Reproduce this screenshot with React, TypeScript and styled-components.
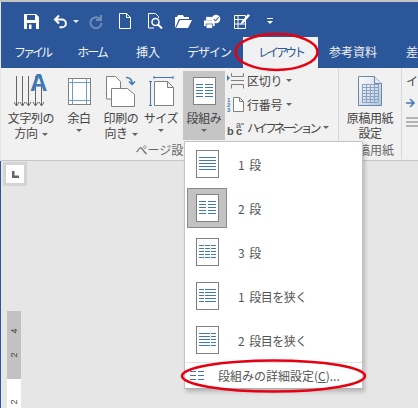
import React from 'react';
import styled, { createGlobalStyle } from 'styled-components';

const GlobalStyle = createGlobalStyle`
  html, body { margin: 0; padding: 0; background: #e6e6e6; }
  body { font-family: "Noto Sans CJK JP", "Noto Sans", sans-serif; }
`;

const Page = styled.div`
  position: relative;
  width: 418px;
  height: 408px;
  overflow: hidden;
  display: flex;
  flex-direction: column;
  border-top: 2px solid #c4c4c4;
  box-sizing: border-box;
`;

const Header = styled.div`
  background: #2b579a;
  height: 66px;
  margin-left: 1px;
  display: flex;
  flex-direction: column;
  flex: none;
`;

const Qat = styled.div`
  height: 35px;
  display: flex;
  align-items: center;
  padding-left: 23px;
  padding-top: 3px;
  box-sizing: border-box;
`;

const QatIcon = styled.svg<{ $gap: number }>`
  margin-right: ${p => p.$gap}px;
  flex: none;
`;

const Tabs = styled.div`
  flex: 1;
  display: flex;
  align-items: stretch;
`;

const Tab = styled.div<{ $w: number; $active?: boolean; $track?: number }>`
  width: ${p => p.$w}px;
  flex: none;
  display: flex;
  align-items: center;
  justify-content: center;
  font-size: 12px;
  letter-spacing: ${p => p.$track ?? 0}px;
  white-space: nowrap;
  color: ${p => (p.$active ? '#2b579a' : '#f2f2f2')};
  background: ${p => (p.$active ? '#f1f1f1' : 'transparent')};
  padding-bottom: 3px;
  box-sizing: border-box;
`;

const Ribbon = styled.div`
  height: 93px;
  flex: none;
  background: #f1f1f1;
  border-bottom: 1px solid #c6c6c6;
  margin-left: 1px;
  display: flex;
  box-sizing: border-box;
`;

const Group = styled.div<{ $w: number; $pad?: number; $last?: boolean }>`
  width: ${p => p.$w}px;
  flex: none;
  display: flex;
  flex-direction: column;
  padding-left: ${p => p.$pad ?? 0}px;
  box-sizing: border-box;
  border-right: ${p => (p.$last ? 'none' : '1px solid #d8d8d8')};
  margin-bottom: 1px;
`;

const GroupBody = styled.div`
  flex: 1;
  display: flex;
  padding-top: 3px;
`;

const GroupLabel = styled.div<{ $shift?: number }>`
  height: 17px;
  font-size: 12px;
  line-height: 15px;
  color: #666;
  text-align: center;
  white-space: nowrap;
  padding-right: ${p => p.$shift ?? 0}px;
`;

const LargeButton = styled.div<{ $w: number; $on?: boolean }>`
  width: ${p => p.$w}px;
  height: 69px;
  flex: none;
  display: flex;
  flex-direction: column;
  align-items: center;
  background: ${p => (p.$on ? '#c5c5c5' : 'transparent')};
  padding-top: 2px;
  box-sizing: border-box;
`;

const IconSlot = styled.div`
  height: 36px;
  flex: none;
  display: flex;
  align-items: center;
  justify-content: center;
`;

const LargeLabel = styled.div`
  font-size: 12px;
  line-height: 15px;
  color: #444;
  text-align: center;
  white-space: nowrap;
  letter-spacing: -0.4px;
  margin-top: 1px;
`;

const Caret = styled.span`
  display: inline-block;
  width: 0;
  height: 0;
  border-left: 3px solid transparent;
  border-right: 3px solid transparent;
  border-top: 3px solid #666;
  vertical-align: middle;
  margin-left: 4px;
`;

const BlockCaret = styled(Caret)`
  display: block;
  margin: 4px auto 0;
`;

const SmallColumn = styled.div`
  display: flex;
  flex-direction: column;
  margin-top: -2px;
  width: 110px;
  flex: none;
`;

const SmallRow = styled.div<{ $track?: number }>`
  height: 23.5px;
  display: flex;
  align-items: center;
  font-size: 12px;
  color: #444;
  white-space: nowrap;
  letter-spacing: ${p => p.$track ?? -0.2}px;
`;

const SmallIcon = styled.div`
  width: 22px;
  flex: none;
  padding-left: 2px;
  box-sizing: border-box;
  display: flex;
`;

const EdgeColumn = styled.div`
  display: flex;
  flex-direction: column;
  align-items: flex-start;
  padding-left: 4px;
  padding-top: 4px;
  gap: 9px;
  font-size: 12px;
  color: #444;
  white-space: nowrap;
`;

const Workspace = styled.div`
  flex: 1;
  display: flex;
  flex-direction: column;
  background: #e6e6e6;
  border-left: 1px solid #2b579a;
`;

const TabStop = styled.div`
  width: 24px;
  height: 24px;
  margin: 1px 0 0 2px;
  background: #d4d4d4;
  display: flex;
  align-items: center;
  justify-content: center;
  flex: none;
`;

const TabStopInner = styled.div`
  width: 18px;
  height: 18px;
  background: #fff;
  display: flex;
  align-items: center;
  justify-content: center;
`;

const Ruler = styled.div`
  width: 14px;
  margin: 125px 0 0 6px;
  flex: 1;
  display: flex;
  flex-direction: column;
`;

const RulerPart = styled.div<{ $h?: number; $white?: boolean }>`
  height: ${p => (p.$h ? `${p.$h}px` : 'auto')};
  flex: ${p => (p.$h ? 'none' : 1)};
  background: ${p => (p.$white ? '#fff' : '#c2c2c2')};
  display: flex;
  flex-direction: column;
  align-items: center;
  font-size: 9px;
  line-height: 10px;
  color: #444;
  font-family: "Liberation Sans", sans-serif;
`;

const RulerNum = styled.span<{ $top: number }>`
  transform: rotate(-90deg);
  margin-top: ${p => p.$top}px;
`;

const Menu = styled.div`
  position: absolute;
  left: 184px;
  top: 139px;
  width: 179px;
  height: 248px;
  background: #fff;
  border: 1px solid #c4c4c4;
  border-bottom-color: #b0b0b0;
  box-shadow: 2px 3px 4px rgba(0, 0, 0, 0.2);
  box-sizing: border-box;
  display: flex;
  flex-direction: column;
`;

const MenuItem = styled.div`
  height: 44px;
  flex: none;
  display: flex;
  align-items: center;
  font-size: 12px;
  color: #555;
  white-space: nowrap;
`;

const MenuIconBox = styled.div<{ $on?: boolean }>`
  width: 40px;
  height: 40px;
  margin-left: 2px;
  flex: none;
  display: flex;
  align-items: center;
  justify-content: center;
  box-sizing: border-box;
  background: ${p => (p.$on ? '#c2c2c2' : 'transparent')};
  border: 1px solid ${p => (p.$on ? '#8a8a8a' : 'transparent')};
`;

const MenuText = styled.span`
  margin-left: 11px;
  word-spacing: 3px;
  letter-spacing: -0.5px;
`;

const Divider = styled.div`
  height: 1px;
  background: #e0e0e0;
  margin: 0 0 0 1px;
  flex: none;
`;

const FooterItem = styled.div`
  flex: 1;
  display: flex;
  align-items: center;
  font-size: 12px;
  color: #555;
  padding-left: 5px;
  white-space: nowrap;
`;

const FooterText = styled.span`
  margin-left: 14px;
`;

const Underline = styled.span`
  text-decoration: underline;
`;

const Annotation = styled.svg`
  position: absolute;
  left: 0;
  top: -2px;
  pointer-events: none;
`;

const BLUE = '#3f78b5';

const Save = () => (
  <QatIcon $gap={14} width="15" height="15" viewBox="0 0 15 15">
    <path d="M0 0h12l3 3v12H0z" fill="#fff" />
    <rect x="3" y="1" width="8" height="5" fill="#2b579a" />
    <rect x="3" y="9" width="9" height="6" fill="#2b579a" />
    <rect x="5" y="10.5" width="2.5" height="4.5" fill="#fff" />
  </QatIcon>
);

const Undo = () => (
  <QatIcon $gap={5} width="15" height="15" viewBox="0 0 15 15">
    <path d="M6 1.5L2 5.5l4 4M2.5 5.5H9a3.8 3.8 0 0 1 0 7.800H6.500" fill="none" stroke="#fff" strokeWidth="2" />
  </QatIcon>
);

const QatCaret = ({ gap }: { gap: number }) => (
  <QatIcon $gap={gap} width="6" height="3" viewBox="0 0 6 3">
    <path d="M0 0h6L3 3z" fill="#e8eef6" />
  </QatIcon>
);

const Redo = () => (
  <QatIcon $gap={16} width="14" height="15" viewBox="0 0 14 15">
    <path d="M12 1v5H7M11.5 5.5A5.500 5.500 0 1 0 12.500 9" fill="none" stroke="#6f8db8" strokeWidth="2" />
  </QatIcon>
);

const NewDoc = () => (
  <QatIcon $gap={17} width="12" height="16" viewBox="0 0 12 16">
    <path d="M.5.5h7l4 4v11H.5z M7.500.5v4h4" fill="#2b579a" stroke="#fff" />
  </QatIcon>
);

const Preview = () => (
  <QatIcon $gap={12} width="15" height="16" viewBox="0 0 15 16">
    <path d="M.5 15V.5h7l3 3V5M.5 15H6" fill="none" stroke="#fff" />
    <circle cx="7.5" cy="9" r="3.5" fill="none" stroke="#fff" strokeWidth="1.5" />
    <path d="M10 11.5l4 4" stroke="#fff" strokeWidth="2" />
  </QatIcon>
);

const Open = () => (
  <QatIcon $gap={12} width="17" height="13" viewBox="0 0 17 13">
    <path d="M0 13V2h2l1-2h5l1 2h5v2H4z" fill="#fff" />
    <path d="M1 13l4-8h12l-4 8z" fill="#fff" />
  </QatIcon>
);

const Check = () => (
  <QatIcon $gap={13} width="17" height="15" viewBox="0 0 24 19">
    <rect x="0" y="8" width="15" height="8" fill="#fff" />
    <rect x="3" y="3" width="9" height="5" fill="#fff" />
    <rect x="3" y="13" width="9" height="6" fill="#fff" stroke="#2b579a" />
    <circle cx="17" cy="6" r="6" fill="#fff" />
    <path d="M14 6l2.5 2.5 4-5" fill="none" stroke="#2b579a" strokeWidth="1.5" />
  </QatIcon>
);

const EditTable = () => (
  <QatIcon $gap={17} width="16" height="16" viewBox="0 0 16 16">
    <path d="M.5 2.500h11v13H.5zM.5 6.500h11M.5 11h11M4 2.500v13" fill="none" stroke="#fff" />
    <path d="M6 12l2-4 6-7 2 1.500-6 7z" fill="#fff" />
  </QatIcon>
);

const QatMore = () => (
  <QatIcon $gap={0} width="6" height="6" viewBox="0 0 6 6">
    <rect x="0" y="0" width="6" height="1" fill="#fff" />
    <path d="M0 3h6L3 6z" fill="#fff" />
  </QatIcon>
);

const DirectionIcon = () => (
  <svg width="34" height="34" viewBox="0 0 34 34">
    <g stroke="#666" fill="none">
      {[2.5, 8.5, 14.5, 21.5, 27.5].map(x => (
        <path key={x} d={`M${x} 2v30M${x - 2.5} 28l2.500 4 2.500-4`} />
      ))}
    </g>
    <text x="16" y="17" fontFamily="Liberation Sans, sans-serif" fontSize="24" fontWeight="700" fill="#3f78b5">A</text>
  </svg>
);

const MarginIcon = () => (
  <svg width="23" height="27" viewBox="0 0 23 27">
    <rect x=".5" y=".5" width="22" height="26" fill="#fff" stroke="#808080" />
    <path d="M0 4.500h23M0 22.500h23M4.500 0v27M18.500 0v27" stroke="#6f9ccb" />
  </svg>
);

const OrientationIcon = () => (
  <svg width="30" height="31" viewBox="0 0 30 31">
    <path d="M.5 23V.5h9l5 5V23z" fill="#fff" stroke="#808080" />
    <path d="M5.500 30.500V12.500h16l7 6v12z" fill="#fff" stroke="#808080" />
    <path d="M20 1.500c4 0 6 2 6 6M23 5.500l3 3 3-3" fill="none" stroke={BLUE} strokeWidth="1.5" />
  </svg>
);

const SizeIcon = () => (
  <svg width="25" height="30" viewBox="0 0 25 30">
    <path d="M5.500 5.500h13l6 6v18h-19z M18.500 5.500v6h6" fill="#fff" stroke="#808080" />
    <path d="M5 1.500h19M5 0v3M24 0v3M1.500 5v24M0 5.500h3M0 29.500h3" stroke={BLUE} fill="none" />
  </svg>
);

const ColumnsIcon = ({ mode }: { mode: number[][] }) => (
  <svg width="23" height="28" viewBox="0 0 23 28">
    <rect x=".5" y=".5" width="22" height="27" fill="#fff" stroke="#808080" />
    {[7, 10, 13, 16, 19].map(y =>
      mode.map(([x1, x2]) => <rect key={`${y}-${x1}`} x={x1} y={y} width={x2 - x1} height="1" fill={BLUE} />),
    )}
  </svg>
);

const BreakIcon = () => (
  <svg width="18" height="16" viewBox="0 0 18 16">
    <path d="M0 2l3 3-3 3z" fill={BLUE} />
    <path d="M4.500 0v3.500h12V0M4.500 15.500v-4h12v4M4 7.500h13" fill="none" stroke="#808080" />
  </svg>
);

const LineNumIcon = () => (
  <svg width="18" height="16" viewBox="0 0 18 16">
    <text x="0" y="6" fontSize="6" fontWeight="700" fill={BLUE} fontFamily="Liberation Sans, sans-serif">1</text>
    <text x="0" y="11" fontSize="6" fontWeight="700" fill={BLUE} fontFamily="Liberation Sans, sans-serif">2</text>
    <text x="0" y="16" fontSize="6" fontWeight="700" fill={BLUE} fontFamily="Liberation Sans, sans-serif">3</text>
    <path d="M6.500 1.500h6l4 4v10h-10z M12.500 1.500v4h4" fill="#fff" stroke="#808080" />
  </svg>
);

const HyphenIcon = () => (
  <svg width="18" height="17" viewBox="0 0 18 17">
    <text x="0" y="16" fontSize="11" fontWeight="700" fill="#555" fontFamily="Liberation Sans, sans-serif">b</text>
    <text x="9" y="9" fontSize="9" fill="#555" fontFamily="Liberation Sans, sans-serif">a</text>
    <text x="9" y="16" fontSize="11" fontWeight="700" fill="#555" fontFamily="Liberation Sans, sans-serif">c</text>
    <path d="M14 5h3" stroke="#555" />
  </svg>
);

const GenkoIcon = () => (
  <svg width="24" height="30" viewBox="0 0 24 30">
    <defs>
      <linearGradient id="genko" x1="0" y1="0" x2="1" y2="1">
        <stop offset="0" stopColor="#ffffff" />
        <stop offset="1" stopColor="#aec6e4" />
      </linearGradient>
    </defs>
    <path d="M.5.5h16l7 7v22H.5z" fill="url(#genko)" stroke="#6f86a6" />
    <path d="M16.500.5v7h7" fill="#dfe8f3" stroke="#6f86a6" />
    <g stroke="#8ea2bd">
      {[8, 11, 14, 17, 20, 23, 26].map(y => (
        <path key={y} d={`M4 ${y}.5h16`} />
      ))}
      {[4, 8, 12, 16, 20].map(x => (
        <path key={x} d={`M${x}.5 8v18`} />
      ))}
    </g>
  </svg>
);

const ONE = [[3, 20]];
const TWO = [[3, 10], [12, 20]];
const THREE = [[3, 8], [9, 14], [15, 20]];
const LEFT_NARROW = [[3, 8], [9, 20]];
const RIGHT_NARROW = [[3, 14], [15, 20]];

const items = [
  { label: '1 段', mode: ONE },
  { label: '2 段', mode: TWO, on: true },
  { label: '3 段', mode: THREE },
  { label: '1 段目を狭く', mode: LEFT_NARROW },
  { label: '2 段目を狭く', mode: RIGHT_NARROW },
];

const App = () => {
  return (
    <Page>
      <GlobalStyle />
      <Header>
        <Qat>
          <Save />
          <Undo />
          <QatCaret gap={10} />
          <Redo />
          <NewDoc />
          <Preview />
          <Open />
          <Check />
          <EditTable />
          <QatMore />
        </Qat>
        <Tabs>
          <Tab $w={62} $track={-3}>ファイル</Tab>
          <Tab $w={58} $track={-2}>ホーム</Tab>
          <Tab $w={54}>挿入</Tab>
          <Tab $w={68} $track={-1}>デザイン</Tab>
          <Tab $w={75} $active $track={-3}>レイアウト</Tab>
          <Tab $w={70}>参考資料</Tab>
          <Tab $w={48}>差</Tab>
        </Tabs>
      </Header>
      <Ribbon>
        <Group $w={338} $pad={6}>
          <GroupBody>
            <LargeButton $w={48}>
              <IconSlot><DirectionIcon /></IconSlot>
              <LargeLabel>
                文字列の
                <br />
                方向
                <Caret />
              </LargeLabel>
            </LargeButton>
            <LargeButton $w={48}>
              <IconSlot><MarginIcon /></IconSlot>
              <LargeLabel>
                余白
                <BlockCaret />
              </LargeLabel>
            </LargeButton>
            <LargeButton $w={36}>
              <IconSlot><OrientationIcon /></IconSlot>
              <LargeLabel>
                印刷の
                <br />
                向き
                <Caret />
              </LargeLabel>
            </LargeButton>
            <LargeButton $w={44}>
              <IconSlot><SizeIcon /></IconSlot>
              <LargeLabel>
                サイズ
                <BlockCaret />
              </LargeLabel>
            </LargeButton>
            <LargeButton $w={42} $on>
              <IconSlot><ColumnsIcon mode={TWO} /></IconSlot>
              <LargeLabel>
                段組み
                <BlockCaret />
              </LargeLabel>
            </LargeButton>
            <SmallColumn>
              <SmallRow>
                <SmallIcon><BreakIcon /></SmallIcon>
                区切り
                <Caret />
              </SmallRow>
              <SmallRow>
                <SmallIcon><LineNumIcon /></SmallIcon>
                行番号
                <Caret />
              </SmallRow>
              <SmallRow $track={-3}>
                <SmallIcon><HyphenIcon /></SmallIcon>
                ハイフネーション
                <Caret />
              </SmallRow>
            </SmallColumn>
          </GroupBody>
          <GroupLabel $shift={14}>ページ設定</GroupLabel>
        </Group>
        <Group $w={63}>
          <GroupBody>
            <LargeButton $w={62}>
              <IconSlot><GenkoIcon /></IconSlot>
              <LargeLabel>
                原稿用紙
                <br />
                設定
              </LargeLabel>
            </LargeButton>
          </GroupBody>
          <GroupLabel>原稿用紙</GroupLabel>
        </Group>
        <Group $w={20} $last>
          <EdgeColumn>
            <span>インデント</span>
            <svg width="14" height="10" viewBox="0 0 14 10">
              <path d="M0 5h7M4 1l4 4-4 4" fill="none" stroke={BLUE} strokeWidth="1.5" />
            </svg>
            <svg width="14" height="10" viewBox="0 0 14 10">
              <path d="M0 1h14M0 5h14M0 9h14" stroke="#777" />
            </svg>
          </EdgeColumn>
        </Group>
      </Ribbon>
      <Workspace>
        <TabStop>
          <TabStopInner>
            <svg width="7" height="7" viewBox="0 0 7 7">
              <path d="M0 0h2.500v4.500H7V7H0z" fill="#666" />
            </svg>
          </TabStopInner>
        </TabStop>
        <Ruler>
          <RulerPart>
            <RulerNum $top={15}>4</RulerNum>
            <RulerNum $top={14}>2</RulerNum>
          </RulerPart>
          <RulerPart $h={29} $white>
            <RulerNum $top={18}>2</RulerNum>
          </RulerPart>
        </Ruler>
      </Workspace>
      <Menu>
        {items.map(item => (
          <MenuItem key={item.label}>
            <MenuIconBox $on={item.on}>
              <ColumnsIcon mode={item.mode} />
            </MenuIconBox>
            <MenuText>{item.label}</MenuText>
          </MenuItem>
        ))}
        <Divider />
        <FooterItem>
          <svg width="14" height="9" viewBox="0 0 14 9">
            <path d="M0 .5h6M8 .5h6M0 4.500h6M8 4.500h6M0 8.500h6M8 8.500h6" stroke={BLUE} />
          </svg>
          <FooterText>
            段組みの詳細設定(<Underline>C</Underline>)...
          </FooterText>
        </FooterItem>
      </Menu>
      <Annotation width="418" height="408" viewBox="0 0 418 408">
        <ellipse cx="276.5" cy="52" rx="41" ry="18" fill="none" stroke="#e60012" strokeWidth="2.5" />
        <ellipse cx="273.5" cy="376" rx="91.5" ry="15.5" fill="none" stroke="#e60012" strokeWidth="2.5" />
      </Annotation>
    </Page>
  );
};

export default App;
